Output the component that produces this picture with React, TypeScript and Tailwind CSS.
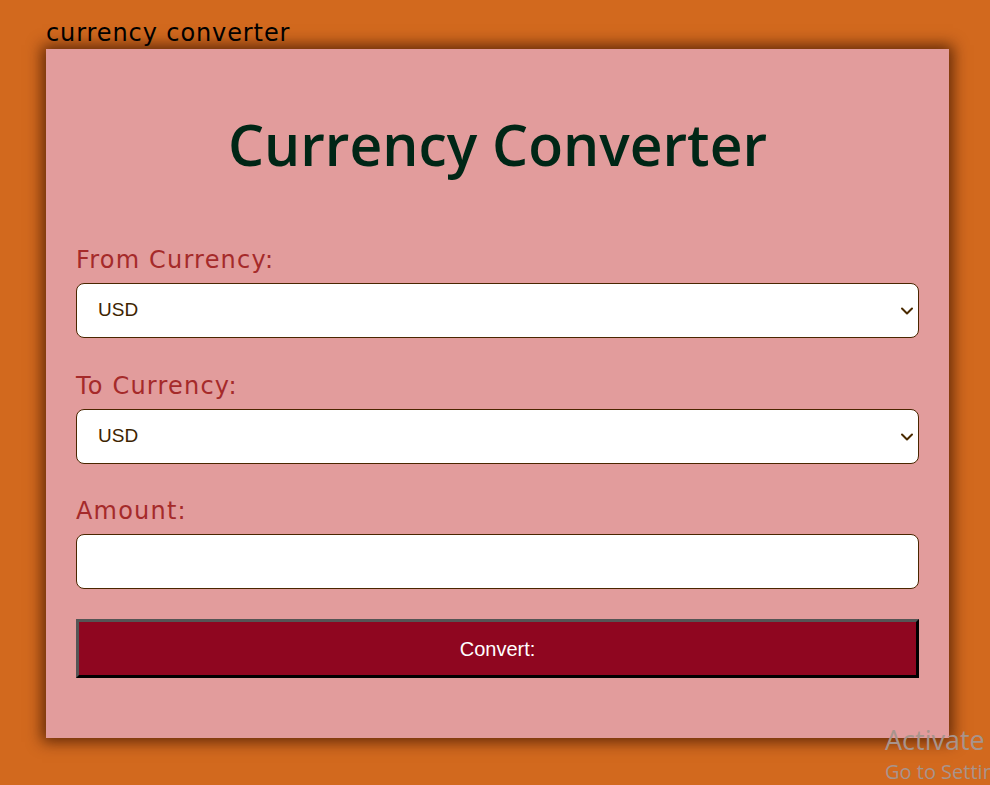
import React, { useState } from "react";

const currencies = ["USD", "EUR", "GBP", "INR", "JPY"];

function Chevron() {
  return (
    <svg
      className="pointer-events-none absolute right-[5px] top-1/2 -translate-y-1/2"
      width="14"
      height="10"
      viewBox="0 0 14 10"
      fill="none"
    >
      <path d="M2 2.5 L7 7.5 L12 2.5" stroke="#4a2a00" strokeWidth="2" strokeLinecap="round" strokeLinejoin="round" />
    </svg>
  );
}

function App() {
  const [from, setFrom] = useState("USD");
  const [to, setTo] = useState("USD");
  const [amount, setAmount] = useState("");

  return (
    <div className="relative min-h-[785px] w-full overflow-hidden bg-[#d2691e] font-['DejaVu_Sans',sans-serif]">
      <div className="px-[46px] pt-[18px]">
        <p className="text-[24px] leading-[31px] tracking-[0.9px] text-black">currency converter</p>
        <div className="w-[903px] bg-[#e29c9c] px-[30px] pt-[57px] pb-[60px] shadow-[0_0_14px_4px_rgba(60,20,0,0.75)]">
          <h1 className="text-center font-['Open_Sans',sans-serif] text-[57px] font-semibold leading-[76px] text-[#002616]">
            Currency Converter
          </h1>

          <div className="mt-[61px]">
            <label className="block text-[24px] leading-[34px] tracking-[1.2px] text-[#a52a2a]">From Currency:</label>
            <div className="relative mt-[6px]">
              <select
                value={from}
                onChange={(e) => setFrom(e.target.value)}
                className="h-[55px] w-full appearance-none rounded-[8px] border border-[#4a2600] bg-white px-[21px] font-['Liberation_Sans',sans-serif] text-[19px] text-[#3d2400] outline-none"
              >
                {currencies.map((c) => (
                  <option key={c}>{c}</option>
                ))}
              </select>
              <Chevron />
            </div>
          </div>

          <div className="mt-[31px]">
            <label className="block text-[24px] leading-[34px] tracking-[1.2px] text-[#a52a2a]">To Currency:</label>
            <div className="relative mt-[6px]">
              <select
                value={to}
                onChange={(e) => setTo(e.target.value)}
                className="h-[55px] w-full appearance-none rounded-[8px] border border-[#4a2600] bg-white px-[21px] font-['Liberation_Sans',sans-serif] text-[19px] text-[#3d2400] outline-none"
              >
                {currencies.map((c) => (
                  <option key={c}>{c}</option>
                ))}
              </select>
              <Chevron />
            </div>
          </div>

          <div className="mt-[30px]">
            <label className="block text-[24px] leading-[34px] tracking-[1.2px] text-[#a52a2a]">Amount:</label>
            <input
              value={amount}
              onChange={(e) => setAmount(e.target.value)}
              className="mt-[6px] h-[55px] w-full rounded-[8px] border border-[#4a2600] bg-white px-[21px] font-['Liberation_Sans',sans-serif] text-[19px] text-[#3d2400] outline-none"
            />
          </div>

          <button className="mt-[30px] h-[59px] w-full border-[3px] border-t-[#555555] border-l-[#555555] border-r-black border-b-black bg-[#8f0620] font-['Liberation_Sans',sans-serif] text-[20px] text-white">
            Convert:
          </button>
        </div>
      </div>

      <div className="absolute left-[885px] top-[723px] whitespace-nowrap font-['Open_Sans',sans-serif] text-[#a8948c]">
        <p className="text-[27px] leading-[34px]">Activate Windows</p>
        <p className="text-[20px] leading-[30px]">Go to Settings to activate Windows.</p>
      </div>
    </div>
  );
}

export default App;
